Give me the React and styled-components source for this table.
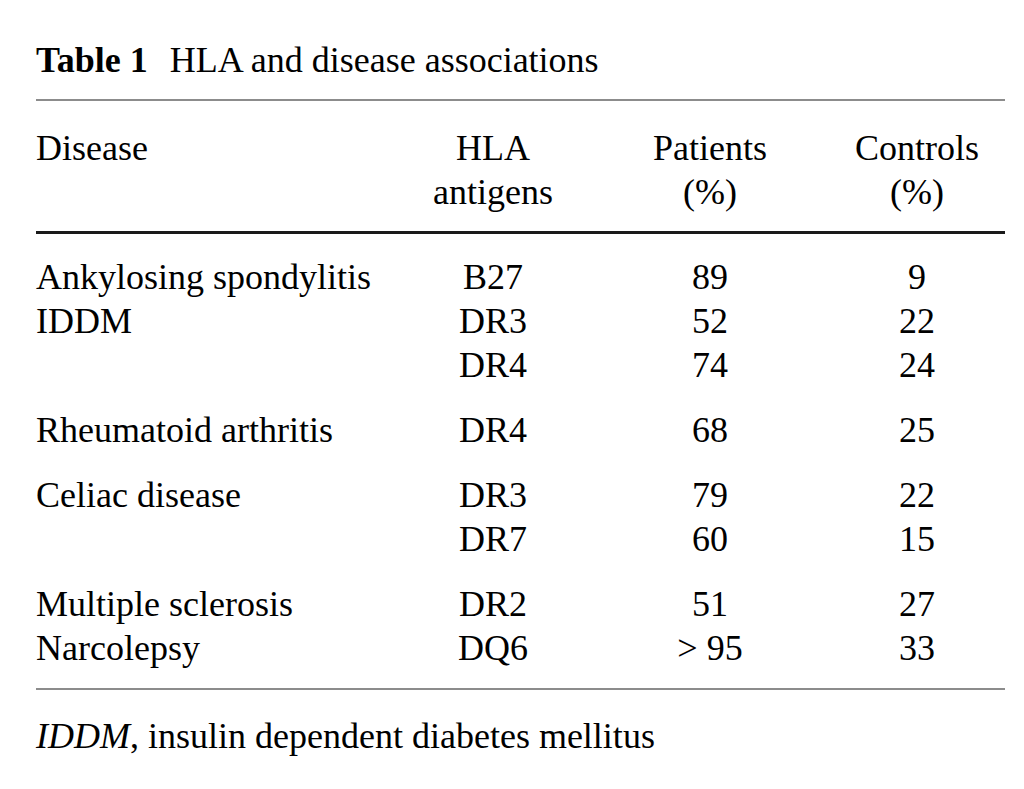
import React from "react";
import styled, { createGlobalStyle } from "styled-components";

const Global = createGlobalStyle`
  html, body {
    margin: 0;
    padding: 0;
    background: #ffffff;
  }
  body {
    font-family: "Liberation Serif", "Times New Roman", serif;
    color: #000;
  }
`;

const Page = styled.div`
  width: 969px;
  padding: 38px 0 0 36px;
  font-size: 36px;
  line-height: 44px;
`;

const Title = styled.div`
  white-space: nowrap;
`;

const Label = styled.span`
  font-weight: bold;
  margin-right: 22px;
`;

const Rule = styled.div`
  height: ${(p) => p.$h || 2}px;
  background: ${(p) => p.$color || "#8c8c8c"};
  margin-top: ${(p) => p.$mt}px;
`;

const Row = styled.div`
  display: grid;
  grid-template-columns: 377px 160px 274px 140px;
  margin-top: ${(p) => p.$mt || 0}px;
`;

const Cell = styled.div`
  text-align: ${(p) => (p.$left ? "left" : "center")};
  white-space: nowrap;
`;

const Group = styled.div`
  margin-top: ${(p) => p.$mt}px;
`;

const Footer = styled.div`
  margin-top: ${(p) => p.$mt}px;
  white-space: nowrap;
`;

const groups = [
  [
    ["Ankylosing spondylitis", "B27", "89", "9"],
    ["IDDM", "DR3", "52", "22"],
    ["", "DR4", "74", "24"],
  ],
  [["Rheumatoid arthritis", "DR4", "68", "25"]],
  [
    ["Celiac disease", "DR3", "79", "22"],
    ["", "DR7", "60", "15"],
  ],
  [
    ["Multiple sclerosis", "DR2", "51", "27"],
    ["Narcolepsy", "DQ6", "> 95", "33"],
  ],
];

export default function App() {
  return (
    <>
      <Global />
      <Page>
        <Title>
          <Label>Table 1</Label>HLA and disease associations
        </Title>
        <Rule $mt={17} $h={2} />
        <Row $mt={25}>
          <Cell $left>Disease</Cell>
          <Cell>
            HLA
            <br />
            antigens
          </Cell>
          <Cell>
            Patients
            <br />
            (%)
          </Cell>
          <Cell>
            Controls
            <br />
            (%)
          </Cell>
        </Row>
        <Rule $mt={17} $h={3} $color="#1a1a1a" />
        {groups.map((g, gi) => (
          <Group key={gi} $mt={gi === 0 ? 21 : 21}>
            {g.map((r, ri) => (
              <Row key={ri}>
                <Cell $left>{r[0]}</Cell>
                <Cell>{r[1]}</Cell>
                <Cell>{r[2]}</Cell>
                <Cell>{r[3]}</Cell>
              </Row>
            ))}
          </Group>
        ))}
        <Rule $mt={18} $h={2} />
        <Footer $mt={24}>
          <i>IDDM</i>, insulin dependent diabetes mellitus
        </Footer>
      </Page>
    </>
  );
}
